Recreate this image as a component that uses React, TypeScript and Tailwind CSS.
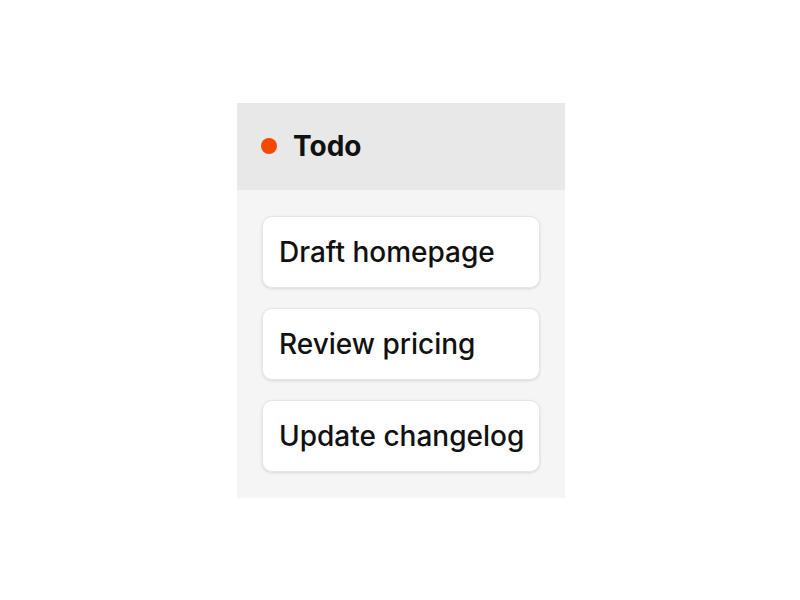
import React from "react";

const tasks = ["Draft homepage", "Review pricing", "Update changelog"];

export default function App() {
  return (
    <div
      className="min-h-screen w-full flex items-center justify-center bg-white"
      style={{ fontFamily: "Inter, 'Noto Sans', sans-serif" }}
    >
      <div className="w-[328px] ml-[2px] bg-[#f5f5f5] flex flex-col">
        <div className="h-[87px] bg-[#e8e8e8] flex items-center px-6 gap-4">
          <span className="w-4 h-4 rounded-full bg-[#f54900] shrink-0" />
          <span className="text-[28px] leading-8 font-bold text-[#111111]">Todo</span>
        </div>
        <div className="flex flex-col gap-5 px-[25px] py-[26px]">
          {tasks.map((t) => (
            <div
              key={t}
              className="h-[72px] bg-white rounded-[10px] border border-[#e6e6e6] shadow-[0_1px_3px_rgba(0,0,0,0.12)] flex items-center px-4"
            >
              <span className="text-[28px] leading-8 font-medium text-[#111111] whitespace-nowrap">{t}</span>
            </div>
          ))}
        </div>
      </div>
    </div>
  );
}
